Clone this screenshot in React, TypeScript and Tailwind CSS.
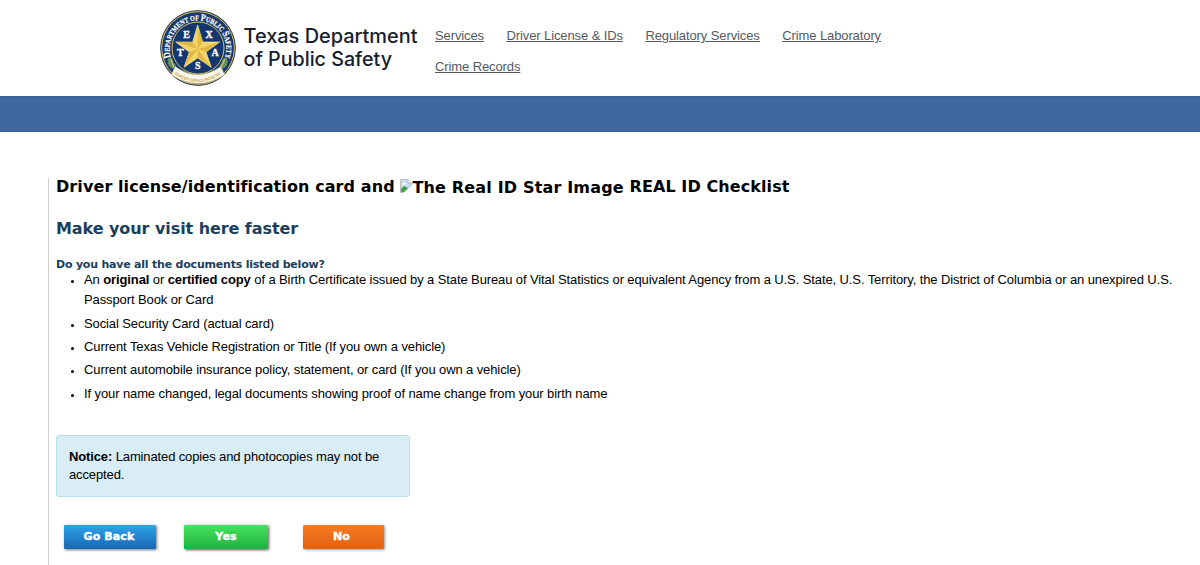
const links = [
  "Services",
  "Driver License & IDs",
  "Regulatory Services",
  "Crime Laboratory",
  "Crime Records",
];

const documents = [
  "Social Security Card (actual card)",
  "Current Texas Vehicle Registration or Title (If you own a vehicle)",
  "Current automobile insurance policy, statement, or card (If you own a vehicle)",
  "If your name changed, legal documents showing proof of name change from your birth name",
];

const letters = [
  { s: "E", x: 110, y: 113 },
  { s: "X", x: 177, y: 113 },
  { s: "T", x: 91, y: 168 },
  { s: "A", x: 195, y: 168 },
  { s: "S", x: 143, y: 208 },
];

function Seal() {
  return (
    <svg className="w-[76px] h-[76px] shrink-0 tracking-normal" viewBox="30 30 228 228">
      <defs>
        <path id="ring" d="M 63 172 A 85 85 0 1 1 225 172" />
        <path id="scroll" d="M 72 222 Q 143 270 214 222" />
      </defs>
      <circle cx="144" cy="144" r="112" fill="#17396d" stroke="#2c3a4a" strokeWidth="3" />
      <circle cx="144" cy="144" r="109" fill="none" stroke="#d9c15c" strokeWidth="3" />
      <circle cx="144" cy="144" r="78" fill="#14376f" stroke="#d9c15c" strokeWidth="3" />
      <text
        fill="#fff"
        fontSize="22"
        stroke="#fff"
        strokeWidth="0.6"
        className="font-['Liberation_Serif',serif] font-bold"
      >
        <textPath href="#ring" textLength="320" lengthAdjust="spacingAndGlyphs">
          <tspan fontSize="30">D</tspan>EPARTMENT OF <tspan fontSize="30">P</tspan>UBLIC{" "}
          <tspan fontSize="30">S</tspan>AFETY
        </textPath>
      </text>
      <path
        d="M143 75 L158 126 L209 126 L168 156 L184 202 L143 174 L102 202 L118 156 L77 126 L128 126 Z"
        fill="#f6d567"
        stroke="#f7e7a0"
        strokeWidth="2"
      />
      <path
        d="M143 77 V148 L158 126 Z M208 126 L143 148 L168 155 Z M183 200 L143 148 V172 Z M103 200 L143 148 L118 155 Z M78 126 L143 148 L128 126 Z"
        fill="#e3b844"
      />
      {letters.map((l) => (
        <text
          key={l.s}
          x={l.x}
          y={l.y}
          textAnchor="middle"
          fontSize="30"
          fill="#fff"
          stroke="#fff"
          strokeWidth="1"
          className="font-['Liberation_Serif',serif] font-bold"
        >
          {l.s}
        </text>
      ))}
      <path
        d="M56 172 q16 2 14 16 q10 4 6 20 q-16 -2 -20 -12 q-6 -10 0 -24 Z M230 172 q-16 2 -14 16 q-10 4 -6 20 q16 -2 20 -12 q6 -10 0 -24 Z"
        fill="#5f8c68"
      />
      <path d="M62 178 l10 24 M224 178 l-10 24" stroke="#d9c15c" strokeWidth="4" />
      <path
        d="M76 200 Q143 248 212 200 L224 224 Q143 276 64 224 Z"
        fill="#f8f6ee"
        stroke="#d5c88d"
        strokeWidth="2"
      />
      <text fill="#c5a032" fontSize="12" className="font-['Liberation_Sans',sans-serif] font-bold">
        <textPath href="#scroll" textLength="156" lengthAdjust="spacingAndGlyphs">
          COURTESY SERVICE PROTECTION
        </textPath>
      </text>
    </svg>
  );
}

function BrokenImage() {
  return (
    <svg className="inline-block w-3 h-3.5 -mt-1.5 align-middle" viewBox="0 0 12 14">
      <path d="M0.5 0.5 H8 L11.5 4 V6 L4 13.5 H0.5 Z" fill="#c9daf6" stroke="#c0c0c0" />
      <path d="M8 0.5 V4 H11.5" fill="#fff" stroke="#b5b5b5" />
      <path d="M1 13 V10 L4 7 L8 9 L4 13 Z" fill="#43a047" />
      <path d="M2 5 q1 -2 2.5 -1 q2 0 1.5 1.5 H2 Z" fill="#fff" />
    </svg>
  );
}

export default function App() {
  return (
    <div className="w-full h-[565px] overflow-hidden bg-white text-black font-['Liberation_Sans',Arial,sans-serif] text-[13px] tracking-[-0.105px]">
      <header className="h-24 pl-40 pt-2.5 flex items-start">
        <Seal />
        <svg className="w-[180px] h-[60px] ml-[7px] mt-2 shrink-0" viewBox="0 0 180 60">
          <g fill="#16202e" fontSize="19.5" className="font-['Inter',sans-serif] font-medium tracking-normal">
            <text x="0.5" y="25" textLength="174" lengthAdjust="spacingAndGlyphs">
              Texas Department
            </text>
            <text x="0.5" y="48" textLength="148.5" lengthAdjust="spacingAndGlyphs">
              of Public Safety
            </text>
          </g>
        </svg>
        <nav className="w-[480px] ml-3 mt-2.5 flex flex-wrap gap-x-[22.5px] text-[#54595f] leading-[31px]">
          {links.map((l) => (
            <a key={l} href="#" className="underline underline-offset-1">
              {l}
            </a>
          ))}
        </nav>
      </header>
      <div className="h-9 bg-[#3f679f] border-y border-[#33629f]" />
      <main className="ml-12 mt-[46px] h-[387px] pl-[7px] border-l border-[#d0d0d0]">
        <h1 className="h-[38px] font-['DejaVu_Sans',Verdana,sans-serif] font-bold text-base leading-[18px] tracking-[0.09px] whitespace-nowrap">
          Driver license/identification card and{" "}
          <span className="relative top-px tracking-[0.17px]">
            <BrokenImage />
            The Real ID Star Image
          </span>{" "}
          REAL ID Checklist
        </h1>
        <h2 className="h-[43px] font-['DejaVu_Sans',Verdana,sans-serif] font-bold text-base leading-[25px] tracking-[-0.07px] text-[#1a3e5c]">
          Make your visit here faster
        </h2>
        <h3 className="h-[11px] font-['DejaVu_Sans',Verdana,sans-serif] font-bold text-[11px] leading-3 tracking-[-0.21px] text-[#1a3e5c]">
          Do you have all the documents listed below?
        </h3>
        <ul className="list-disc pl-7 leading-5 marker:text-[11px]">
          <li className="mb-[3.5px]">
            An <b>original</b> or <b>certified copy</b> of a Birth Certificate issued by a State
            Bureau of Vital Statistics or equivalent Agency from a U.S. State, U.S. Territory, the
            District of Columbia or an unexpired U.S.
            <br />
            Passport Book or Card
          </li>
          {documents.map((d) => (
            <li key={d} className="mb-[3.4px]">
              {d}
            </li>
          ))}
        </ul>
        <div className="w-[354px] h-[62px] mt-[31px] px-3 py-3 rounded-[3px] border border-[#b4dfe6] bg-[#d9edf7] leading-[18px] tracking-[-0.126px]">
          <b>Notice:</b> Laminated copies and photocopies may not be accepted.
        </div>
        <div className="mt-7 pl-2 flex items-start font-['DejaVu_Sans',sans-serif] font-bold text-[11px] leading-[23px] tracking-[0.1px] text-white [-webkit-text-stroke:0.4px_#fff]">
          <button className="w-[92px] h-6 pb-px pr-0.5 rounded-[1px] bg-linear-to-b from-[#2fa4e7] to-[#1a67b3] shadow-[1px_1px_3px_#777]">
            Go Back
          </button>
          <button className="w-[84px] h-6 pb-px ml-7 rounded-[1px] bg-linear-to-b from-[#44e35c] to-[#1fb141] shadow-[1px_1px_3px_#555]">
            Yes
          </button>
          <button className="w-[81px] h-6 pb-px pr-1 ml-[35px] rounded-[1px] bg-linear-to-b from-[#f87a24] to-[#e06210] shadow-[1px_1px_3px_#999]">
            No
          </button>
        </div>
      </main>
    </div>
  );
}
